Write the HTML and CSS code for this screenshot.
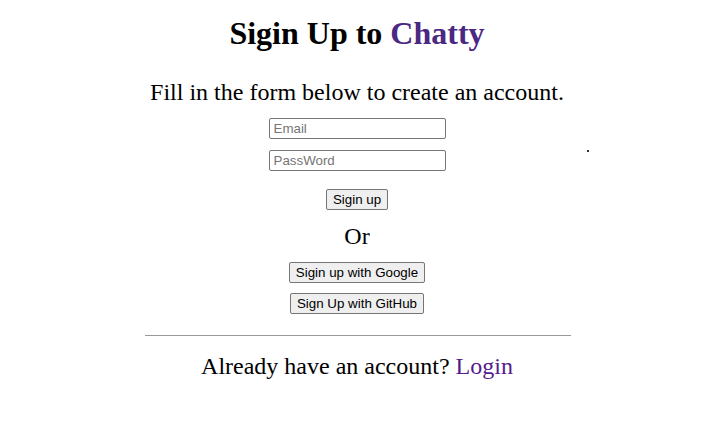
FILE: index.html
```html
<!DOCTYPE html>
<html>
<head>
<meta charset="utf-8">
<link rel="stylesheet" href="styles.css">
</head>
<body>
<div class="page">
  <h1 class="title">Sigin Up to <span class="brand">Chatty</span></h1>
  <p class="lead">Fill in the form below to create an account.</p>
  <form class="form">
    <input class="field" type="email" placeholder="Email">
    <input class="field" type="password" placeholder="PassWord">
    <button class="btn btn-submit" type="button">Sigin up</button>
  </form>
  <p class="or">Or</p>
  <div class="social">
    <button class="btn" type="button">Sigin up with Google</button>
    <button class="btn" type="button">Sign Up with GitHub</button>
  </div>
  <hr class="rule">
  <p class="foot">Already have an account? <a class="login" href="#">Login</a></p>
  <span class="speck"></span>
</div>
</body>
</html>
```
FILE: styles.css
```css
html, body {
  margin: 0;
  background: #fff;
}
body {
  font-family: "Liberation Serif", "Times New Roman", serif;
  color: #000;
}
.page {
  position: relative;
  width: 717px;
  height: 421px;
  display: flex;
  flex-direction: column;
  align-items: center;
  padding-top: 15px;
  padding-right: 3px;
  box-sizing: border-box;
}
.title {
  margin: 0;
  font-size: 32px;
  font-weight: bold;
  line-height: 37px;
}
.brand {
  color: #4b2882;
}
.lead {
  margin: 26px 0 0;
  font-size: 24px;
  line-height: 28px;
}
.form {
  display: flex;
  flex-direction: column;
  align-items: center;
  margin-top: 12px;
}
.field {
  width: 177px;
  height: 21px;
  box-sizing: border-box;
  border: 1px solid #767676;
  border-radius: 2px;
  padding: 1px 4px;
  font-family: "Liberation Sans", Arial, sans-serif;
  font-size: 13.33px;
  margin-bottom: 11px;
}
.field::placeholder {
  color: #757575;
}
.btn {
  font-family: "Liberation Sans", Arial, sans-serif;
  font-size: 13.33px;
  height: 21px;
  padding: 1px 6px;
  background: #efefef;
  border: 1px solid #767676;
  border-radius: 2px;
  color: #000;
}
.btn-submit {
  margin-top: 7px;
}
.or {
  margin: 12px 0 0;
  font-size: 24px;
  line-height: 28px;
}
.social {
  display: flex;
  flex-direction: column;
  align-items: center;
  gap: 10px;
  margin-top: 12px;
}
.rule {
  width: 426px;
  margin: 21px 0 0 2px;
  border: 0;
  border-top: 1px solid #999;
  height: 0;
}
.foot {
  margin: 16px 0 0;
  font-size: 24px;
  line-height: 28px;
}
.login {
  color: #551a8b;
  text-decoration: none;
}
.speck {
  position: absolute;
  left: 587px;
  top: 150px;
  width: 2px;
  height: 2px;
  background: #333;
}
```
